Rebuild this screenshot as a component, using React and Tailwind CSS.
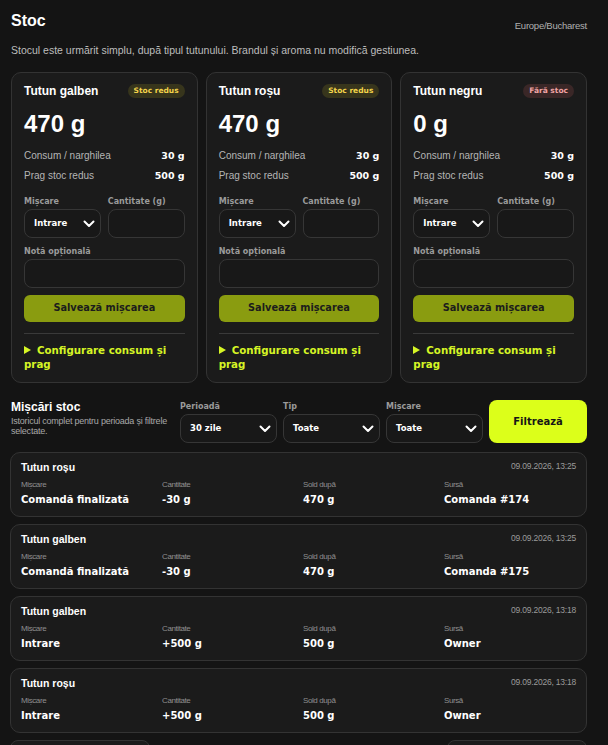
const heavy = { fontFamily: "'DejaVu Sans', sans-serif" };

const stocks = [
  { name: 'Tutun galben', grams: 470, badge: 'Stoc redus', tone: 'low' },
  { name: 'Tutun roșu', grams: 470, badge: 'Stoc redus', tone: 'low' },
  { name: 'Tutun negru', grams: 0, badge: 'Fără stoc', tone: 'out' },
];

const moves = [
  { name: 'Tutun roșu', date: '09.09.2026, 13:25', kind: 'Comandă finalizată', qty: '-30 g', sold: '470 g', src: 'Comanda #174' },
  { name: 'Tutun galben', date: '09.09.2026, 13:25', kind: 'Comandă finalizată', qty: '-30 g', sold: '470 g', src: 'Comanda #175' },
  { name: 'Tutun galben', date: '09.09.2026, 13:18', kind: 'Intrare', qty: '+500 g', sold: '500 g', src: 'Owner' },
  { name: 'Tutun roșu', date: '09.09.2026, 13:18', kind: 'Intrare', qty: '+500 g', sold: '500 g', src: 'Owner' },
];

function Chevron() {
  return (
    <svg width="12" height="8" viewBox="0 0 12 8" fill="none" stroke="white" strokeWidth="2" strokeLinecap="round" strokeLinejoin="round">
      <polyline points="1.5,1.5 6,6 10.5,1.5" />
    </svg>
  );
}

function SelectBox({ value, className = '' }) {
  return (
    <div className={`flex items-center justify-between h-[29px] pl-[9px] pr-[5px] rounded-lg border border-[#363636] bg-[#181818] ${className}`}>
      <span className="text-[8.5px] font-bold text-white" style={heavy}>{value}</span>
      <Chevron />
    </div>
  );
}

function FieldLabel({ children }) {
  return (
    <div className="text-[8px] leading-[10px] font-bold text-[#9a9a9a] mb-[2px]" style={heavy}>
      {children}
    </div>
  );
}

function StockCard({ item }) {
  const badgeTone = item.tone === 'out'
    ? 'bg-[#3a2727] text-[#f0a3a3]'
    : 'bg-[#37351c] text-[#f2d34a]';

  return (
    <div className="flex-1 rounded-[10px] border border-[#333] bg-[#1b1b1b] px-3 pt-[11px] pb-[11px]">
      <div className="flex items-center justify-between h-[14px]">
        <h3 className="text-[12px] leading-[14px] font-bold text-white">{item.name}</h3>
        <span className={`px-[6px] h-[14px] flex items-center rounded-full text-[7.5px] font-bold ${badgeTone}`} style={heavy}>
          {item.badge}
        </span>
      </div>

      <div className="mt-[12px] text-[24px] leading-[28px] font-bold text-white">{item.grams} g</div>

      <div className="mt-[10px] flex items-center justify-between h-[14px]">
        <span className="text-[10px] text-[#b5b5b5]">Consum / narghilea</span>
        <span className="text-[9.5px] font-bold text-white mt-[3px]" style={heavy}>30 g</span>
      </div>
      <div className="mt-[6px] flex items-center justify-between h-[14px]">
        <span className="text-[10px] text-[#b5b5b5]">Prag stoc redus</span>
        <span className="text-[9.5px] font-bold text-white mt-[3px]" style={heavy}>500 g</span>
      </div>

      <div className="mt-[15px] grid grid-cols-2 gap-[7px]">
        <div>
          <FieldLabel>Mișcare</FieldLabel>
          <SelectBox value="Intrare" />
        </div>
        <div>
          <FieldLabel>Cantitate (g)</FieldLabel>
          <div className="h-[29px] rounded-lg border border-[#363636] bg-[#181818]" />
        </div>
      </div>

      <div className="mt-[9px]">
        <FieldLabel>Notă opțională</FieldLabel>
      </div>
      <div className="h-[29px] rounded-lg border border-[#363636] bg-[#181818]" />

      <button className="mt-[7px] w-full h-[27px] rounded-md bg-[#8a9c10] text-[9.75px] font-bold text-[#1c1c1c]" style={heavy}>
        Salvează mișcarea
      </button>

      <div className="mt-[11px] border-t border-[#3a3a3a] pt-[9px]">
        <p className="text-[10.25px] leading-[14px] font-bold text-[#d6f525]" style={heavy}>
          <svg width="13" height="8" viewBox="0 0 13 8" className="inline align-[0px]">
            <polygon points="0,0 7,4 0,8" fill="#d6f525" />
          </svg>
          Configurare consum și prag
        </p>
      </div>
    </div>
  );
}

function MoveRow({ m }) {
  const cols = [
    ['Mișcare', m.kind],
    ['Cantitate', m.qty],
    ['Sold după', m.sold],
    ['Sursă', m.src],
  ];
  return (
    <div className="h-[65px] rounded-[10px] border border-[#333] bg-[#1b1b1b] px-[10px] pt-[8px]">
      <div className="flex items-start justify-between">
        <span className="text-[10.5px] leading-[12px] font-bold text-white">{m.name}</span>
        <span className="text-[8.5px] leading-[10px] text-[#9a9a9a] tracking-tight">{m.date}</span>
      </div>
      <div className="mt-[7px] grid grid-cols-4 gap-x-[9px]">
        {cols.map(([label, value]) => (
          <div key={label}>
            <div className="text-[8px] leading-[10px] text-[#8f8f8f] tracking-tighter">{label}</div>
            <div className="mt-[4px] text-[10px] leading-[12px] font-bold text-white" style={heavy}>{value}</div>
          </div>
        ))}
      </div>
    </div>
  );
}

export default function App() {
  return (
    <div className="h-[745px] overflow-hidden bg-[#141414] pl-[10px] pr-[21px] pt-[12px]" style={{ fontFamily: "'Liberation Sans', Arial, sans-serif" }}>
      {/* Header */}
      <div className="flex items-start justify-between pl-[1px]">
        <h1 className="text-[16px] leading-[18px] font-bold text-white">Stoc</h1>
        <span className="mt-[8px] text-[9.5px] leading-[11px] text-[#b0b0b0] tracking-tight">Europe/Bucharest</span>
      </div>
      <p className="mt-[13px] pl-[1px] text-[10.5px] leading-[12px] text-[#bdbdbd]">
        Stocul este urmărit simplu, după tipul tutunului. Brandul și aroma nu modifică gestiunea.
      </p>

      {/* Stock cards */}
      <div className="mt-[16px] flex gap-2 pl-[1px]">
        {stocks.map((s) => (
          <StockCard key={s.name} item={s} />
        ))}
      </div>

      {/* Movements header + filters */}
      <div className="mt-[17px] flex items-end gap-[6px] pl-[1px]">
        <div className="w-[163px] self-start">
          <h2 className="text-[12px] leading-[14px] font-bold text-white">Mișcări stoc</h2>
          <p className="mt-[2px] text-[9px] leading-[10px] text-[#a8a8a8] tracking-tight">
            Istoricul complet pentru perioada și filtrele selectate.
          </p>
        </div>
        <div className="w-[97px]">
          <FieldLabel>Perioadă</FieldLabel>
          <SelectBox value="30 zile" className="h-[28px]" />
        </div>
        <div className="w-[97px]">
          <FieldLabel>Tip</FieldLabel>
          <SelectBox value="Toate" className="h-[28px]" />
        </div>
        <div className="w-[97px]">
          <FieldLabel>Mișcare</FieldLabel>
          <SelectBox value="Toate" className="h-[28px]" />
        </div>
        <button className="flex-1 h-[43px] rounded-lg bg-[#dcff1a] text-[10px] font-bold text-[#161616]" style={heavy}>
          Filtrează
        </button>
      </div>

      {/* Movement list */}
      <div className="mt-[9px] flex flex-col gap-[7px]">
        {moves.map((m, i) => (
          <MoveRow key={i} m={m} />
        ))}
      </div>

      {/* Pagination */}
      <div className="mt-[7px] flex justify-between">
        <div className="w-[140px] h-[30px] rounded-[8px] border border-[#333] bg-[#1b1b1b]" />
        <div className="w-[140px] h-[30px] rounded-[8px] border border-[#333] bg-[#1b1b1b]" />
      </div>
    </div>
  );
}
